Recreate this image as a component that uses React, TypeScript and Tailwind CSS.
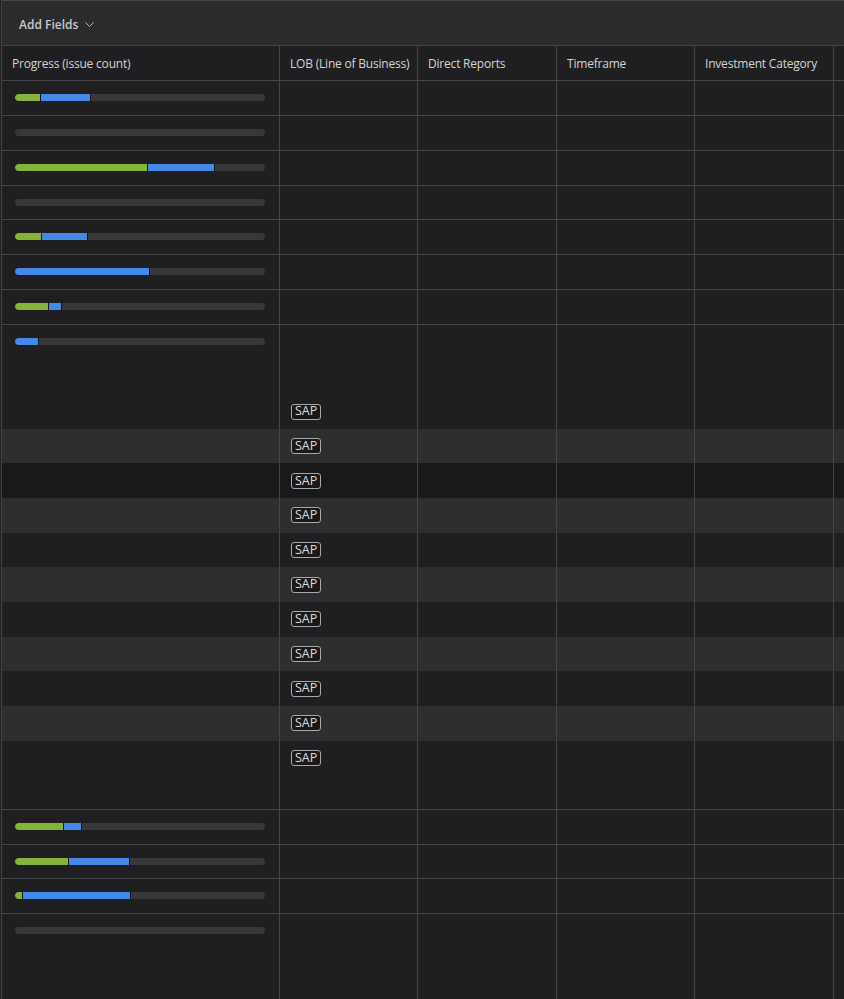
import React from 'react';

type Seg = { green: number; blue: number };

const ROW_BG = {
  normal: 'bg-[#1f1f21]',
  light: 'bg-[#2e2e31]',
  dark: 'bg-[#19191b]',
};

const GRID = 'grid grid-cols-[278px_138px_139px_138px_139px_1fr]';
const CELL = 'border-r border-[#454548]';

const ProgressBar: React.FC<Seg> = ({ green, blue }) => (
  <div className="flex h-[7px] w-[250px] overflow-hidden rounded-full bg-[#38383b]">
    {green > 0 && (
      <div className="h-full rounded-l-full border-r border-[#161618] bg-[#84b53a]" style={{ width: green }} />
    )}
    {blue > 0 && (
      <div
        className={`h-full border-r border-[#161618] bg-[#4589e8] ${green > 0 ? '' : 'rounded-l-full'}`}
        style={{ width: blue }}
      />
    )}
  </div>
);

const SapTag = () => (
  <span className="inline-flex h-[16px] items-center rounded-[3px] border border-[#a9a9ad] bg-[#19191b] px-[3px] text-[12.5px] leading-none text-[#dcdcdc]">
    SAP
  </span>
);

// single row, progress bar + empty cells
const Row: React.FC<{
  seg?: Seg;
  bg?: string;
  border?: boolean;
  h?: string;
  sap?: boolean;
}> = ({ seg, bg = ROW_BG.normal, border = true, h = 'h-[34.65px]', sap }) => (
  <div className={`${GRID} ${h} ${bg} ${border ? 'border-b border-[#454548]' : ''}`}>
    <div className={`${CELL} flex items-start pl-[13px] pt-[13px]`}>{seg && <ProgressBar {...seg} />}</div>
    <div className={`${CELL} flex items-center pl-[11px]`}>{sap && <SapTag />}</div>
    <div className={CELL} />
    <div className={CELL} />
    <div className={CELL} />
    <div />
  </div>
);

const topRows: Seg[] = [
  { green: 26, blue: 50 },
  { green: 0, blue: 0 },
  { green: 133, blue: 67 },
  { green: 0, blue: 0 },
  { green: 27, blue: 46 },
  { green: 0, blue: 135 },
  { green: 34, blue: 13 },
];

// stripe pattern inside the expanded block
const blockRows: { bg: string; sap: boolean }[] = [
  { bg: ROW_BG.normal, sap: false },
  { bg: ROW_BG.normal, sap: false },
  { bg: ROW_BG.normal, sap: true },
  { bg: ROW_BG.light, sap: true },
  { bg: ROW_BG.dark, sap: true },
  { bg: ROW_BG.light, sap: true },
  { bg: ROW_BG.normal, sap: true },
  { bg: ROW_BG.light, sap: true },
  { bg: ROW_BG.normal, sap: true },
  { bg: ROW_BG.light, sap: true },
  { bg: ROW_BG.normal, sap: true },
  { bg: ROW_BG.light, sap: true },
  { bg: ROW_BG.normal, sap: true },
  { bg: ROW_BG.normal, sap: false },
];

const bottomRows: Seg[] = [
  { green: 49, blue: 18 },
  { green: 54, blue: 61 },
  { green: 8, blue: 108 },
];

const headers = ['Progress (issue count)', 'LOB (Line of Business)', 'Direct Reports', 'Timeframe', 'Investment Category'];

export default function App() {
  return (
    <div
      className="h-[999px] w-[844px] overflow-hidden bg-[#1f1f21] pl-px text-[12px] text-[#d4d4d6]"
      style={{ fontFamily: '"Open Sans", "Noto Sans", sans-serif' }}
    >
      <div className="h-full border-l border-t border-[#454548]">
        {/* Toolbar */}
        <div className="flex h-[45px] items-center border-b border-[#454548] bg-[#2b2b2d] pl-[17px] pt-[3px]">
          <button className="flex items-center gap-[6px] text-[12px] font-semibold text-[#c9c9cc]">
            Add Fields
            <svg width="11" height="11" viewBox="0 0 11 11" fill="none" stroke="#b8b8bb" strokeWidth="1">
              <path d="M1.5 3.5 L5.5 7.5 L9.5 3.5" />
            </svg>
          </button>
        </div>

        {/* Header */}
        <div className={`${GRID} h-[35px] border-b border-[#454548] bg-[#1f1f21]`}>
          {headers.map((h) => (
            <div key={h} className={`${CELL} flex items-center pl-[10px] pt-px tracking-[-0.2px] whitespace-nowrap`}>
              {h}
            </div>
          ))}
          <div />
        </div>

        {topRows.map((s, i) => (
          <Row key={i} seg={s} h="h-[34.85px]" />
        ))}

        {blockRows.map((r, i) => (
          <Row
            key={`b${i}`}
            seg={i === 0 ? { green: 0, blue: 24 } : undefined}
            bg={r.bg}
            sap={r.sap}
            border={i === blockRows.length - 1}
          />
        ))}

        {bottomRows.map((s, i) => (
          <Row key={`c${i}`} seg={s} />
        ))}
        <Row seg={{ green: 0, blue: 0 }} h="h-[90px]" border={false} />
      </div>
    </div>
  );
}
